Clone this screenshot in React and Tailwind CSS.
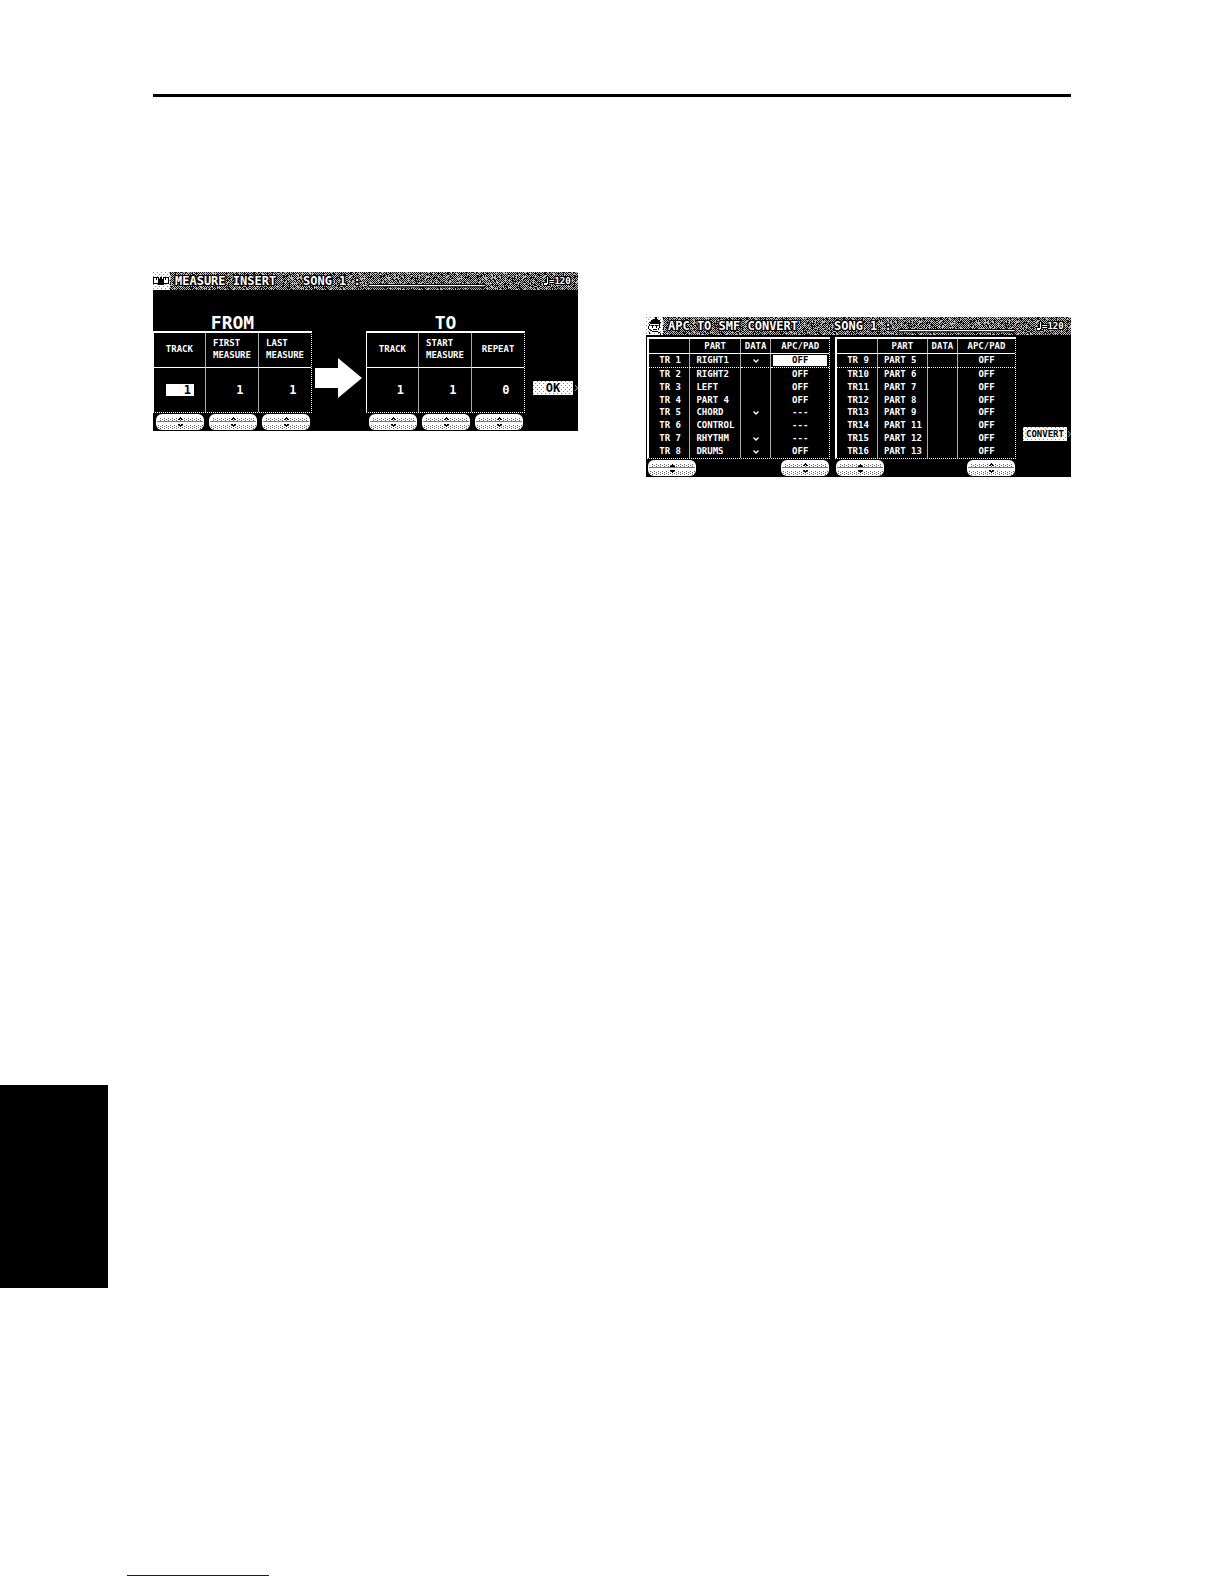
import React from "react";

/* ---------- dithered LCD textures ---------- */

function noisePath(width, height) {
  let seed = 7;
  let d = "";
  for (let y = 0; y < height; y++) {
    for (let x = 0; x < width; x++) {
      seed = (Math.imul(seed, 1664525) + 1013904223) >>> 0;
      const flip = seed / 4294967296 < 0.13;
      const on = (x + y) % 2 === 0;
      if (on !== flip) d += `M${x} ${y}h1v1h-1z`;
    }
  }
  return d;
}

const NOISE = noisePath(97, 18);

function Noise({ id }) {
  return (
    <svg className="absolute inset-0 h-full w-full" shapeRendering="crispEdges" aria-hidden="true">
      <defs>
        <pattern id={id} width="97" height="18" patternUnits="userSpaceOnUse">
          <rect width="97" height="18" fill="#141414" />
          <path d={NOISE} fill="#b4b4b4" />
        </pattern>
      </defs>
      <rect width="100%" height="100%" fill={`url(#${id})`} />
    </svg>
  );
}

function Textures() {
  return (
    <svg width="0" height="0" className="absolute" aria-hidden="true">
      <defs>
        <pattern id="dots" width="4" height="2" patternUnits="userSpaceOnUse">
          <rect width="1" height="1" fill="#666" />
          <rect x="2" y="1" width="1" height="1" fill="#666" />
        </pattern>
        <pattern id="sparse" width="4" height="4" patternUnits="userSpaceOnUse">
          <rect width="1" height="1" fill="#888" />
          <rect x="2" y="2" width="1" height="1" fill="#888" />
        </pattern>
      </defs>
    </svg>
  );
}

/* ---------- icons ---------- */

function InsertIcon() {
  return (
    <svg width="17" height="18" viewBox="0 0 17 18" shapeRendering="crispEdges" className="relative shrink-0">
      <rect width="17" height="18" fill="#fff" />
      <rect width="17" height="18" fill="url(#sparse)" />
      <path d="M0 5h6v7H0zM10 5h6v7h-6z" fill="#fff" />
      <path
        d="M0 5h6v1H0zM0 11h5v1H0zM10 5h6v1h-6zM11 11h5v1h-5zM0 5h1v7H0zM15 5h1v7h-1zM3 6h1v2H3zM12 6h1v2h-1zM5 5h1v3H5zM10 5h1v3h-1z"
        fill="#000"
      />
      <path d="M7 5h2v2H7zM5 7h6v6H5z" fill="#000" />
    </svg>
  );
}

function ConductorIcon() {
  return (
    <svg width="17" height="18" viewBox="0 0 17 18" shapeRendering="crispEdges" className="relative shrink-0">
      <rect width="17" height="18" fill="#fff" />
      <rect width="17" height="18" fill="url(#sparse)" />
      <path d="M9 0h2v2h1v1h2v2h1v1h-1v1H4V6H3V5h2V3h2V2h2z" fill="#000" />
      <path d="M3 7h1v2H3zM2 9h1v3H2zM3 12h1v1H3zM4 13h2v1H4zM13 7h1v4h-1zM12 11h1v2h-1zM6 14h6v1H6z" fill="#000" />
      <path d="M5 8h3v1H5zM6 9h1v2H6zM9 8h3v1H9zM10 9h1v2h-1zM7 12h4v1H7zM3 15h1v2H3zM12 15h2v1h-2zM14 16h1v2h-1z" fill="#000" />
    </svg>
  );
}

function QuarterNote() {
  return (
    <svg width="6" height="9" viewBox="0 0 6 9" shapeRendering="crispEdges" role="img" aria-label="quarter note">
      <path d="M3 0h3v9H1V8H0V5h3z" fill="#000" />
      <path d="M4 0h1v7H4V8H1V6h3z" fill="#fff" />
    </svg>
  );
}

function Arrow() {
  return (
    <svg width="48" height="40" viewBox="0 0 48 40">
      <path d="M0 10H23V0L47 20L23 40V30H0z" fill="#fff" />
    </svg>
  );
}

function Tick() {
  return (
    <svg width="6" height="4" viewBox="0 0 6 4" className="mx-auto" role="img" aria-label="data present">
      <path d="M0.5 0.5L3 3L5.5 0.5" fill="none" stroke="#fff" strokeWidth="1.4" />
    </svg>
  );
}

function EdgeMark() {
  return (
    <svg width="3" height="6" viewBox="0 0 3 6" aria-hidden="true">
      <path d="M0 0L2.5 3L0 6" fill="none" stroke="#999" />
    </svg>
  );
}

/* ---------- LCD controls ---------- */

function Stepper({ label, solid }) {
  return (
    <div className="flex w-12 flex-col overflow-hidden rounded-md bg-white">
      <button type="button" aria-label={`${label} up`} className="block h-2">
        <svg width="48" height="8" viewBox="0 0 48 8" shapeRendering="crispEdges">
          <rect x="3" y="4" width="42" height="3" fill="url(#dots)" />
          <rect x="1" y="7" width="46" height="1" fill="#777" />
          <path d={solid ? "M24 4h1v1h1v1h1v1h-5v-1h1v-1h1z" : "M24 3h1v1h1v1h1v1h-2v-1h-1v1h-2v-1h1v-1h1z"} fill="#000" />
        </svg>
      </button>
      <button type="button" aria-label={`${label} down`} className="block h-2">
        <svg width="48" height="8" viewBox="0 0 48 8" shapeRendering="crispEdges">
          <rect x="1" y="3" width="46" height="4" fill="url(#dots)" />
          <path d={solid ? "M22 2h5v1h-1v1h-1v1h-1v-1h-1v-1h-1z" : "M22 2h2v1h1v-1h2v1h-1v1h-1v1h-1v-1h-1v-1h-1z"} fill="#000" />
        </svg>
      </button>
    </div>
  );
}

function LcdButton({ children, size }) {
  return (
    <button
      type="button"
      className={`relative flex h-[14px] items-center justify-center bg-white font-bold text-black ${size}`}
    >
      <svg className="absolute inset-0 h-full w-full" aria-hidden="true" shapeRendering="crispEdges">
        <rect width="100%" height="100%" fill="url(#sparse)" />
      </svg>
      <span className="relative [text-shadow:1px_0_#fff,-1px_0_#fff,0_1px_#fff,0_-1px_#fff]">{children}</span>
    </button>
  );
}

function TitleBar({ id, icon, title, columns }) {
  return (
    <header className="relative flex h-[18px] items-center overflow-hidden text-[12px] leading-[18px] font-bold whitespace-pre text-white [text-shadow:1px_0_#000,-1px_0_#000,0_1px_#000,0_-1px_#000,1px_1px_#000,-1px_1px_#000,1px_-1px_#000,-1px_-1px_#000]">
      <Noise id={id} />
      {icon}
      <div className={`relative grid flex-1 items-center pl-[5px] ${columns}`}>
        <h2>{title}</h2>
        <span>SONG 1 :</span>
        <span className="self-start leading-[14px]">________________</span>
        <span className="flex items-center text-[9px]">
          <QuarterNote />
          =120
        </span>
      </div>
    </header>
  );
}

/* ---------- Measure insert ---------- */

function MeasureTable({ heading, columns }) {
  return (
    <section className="flex flex-col">
      <h3 className="text-center text-[18px] leading-[16px] font-bold">{heading}</h3>
      <table className="w-full table-fixed border-separate border-spacing-0 border-t-2 border-r border-b border-l border-dotted border-white [border-left-style:solid] [border-top-style:solid]">
        <colgroup>
          <col className="w-[33%]" />
          <col className="w-[34%]" />
          <col className="w-[33%]" />
        </colgroup>
        <thead>
          <tr>
            {columns.map((c, i) => (
              <th
                key={i}
                scope="col"
                className="h-[35px] border-r border-b border-r-[#aaa] border-b-white p-0 pb-[2px] text-center align-middle text-[9px] leading-[12px] font-bold last:border-r-0"
              >
                <span className="inline-block text-left align-middle whitespace-pre">{c.label}</span>
              </th>
            ))}
          </tr>
        </thead>
        <tbody>
          <tr>
            {columns.map((c, i) => (
              <td
                key={i}
                className="h-[44px] border-r border-[#aaa] p-0 pl-px text-center text-[12px] leading-[12px] last:border-r-0"
              >
                <span
                  className={`inline-block w-7 pr-[3px] text-right align-middle font-bold ${
                    c.active ? "bg-white text-black" : ""
                  }`}
                >
                  {c.value}
                </span>
              </td>
            ))}
          </tr>
        </tbody>
      </table>
      <div className="grid grid-cols-3 justify-items-center py-px">
        {columns.map((c, i) => (
          <Stepper key={i} label={`${heading} ${c.label.replace("\n", " ")}`} />
        ))}
      </div>
    </section>
  );
}

function MeasureInsert() {
  return (
    <article className="bg-black text-white">
      <TitleBar
        id="noise-insert"
        title="MEASURE INSERT"
        icon={<InsertIcon />}
        columns="grid-cols-[128fr_66fr_174fr_35fr]"
      />
      <div className="grid grid-cols-[159fr_54fr_159fr_53fr] pt-[25px]">
        <MeasureTable
          heading="FROM"
          columns={[
            { label: "TRACK", value: 1, active: true },
            { label: "FIRST\nMEASURE", value: 1 },
            { label: "LAST\nMEASURE", value: 1 },
          ]}
        />
        <div className="flex justify-center pt-[43px]">
          <Arrow />
        </div>
        <MeasureTable
          heading="TO"
          columns={[
            { label: "TRACK", value: 1 },
            { label: "START\nMEASURE", value: 1 },
            { label: "REPEAT", value: 0 },
          ]}
        />
        <div className="flex items-center justify-end gap-[2px] self-start pt-[66px]">
          <LcdButton size="w-10 text-[12px] leading-[14px]">OK</LcdButton>
          <EdgeMark />
        </div>
      </div>
    </article>
  );
}

/* ---------- APC to SMF convert ---------- */

const LEFT_TRACKS = [
  ["TR 1", "RIGHT1", true, "OFF"],
  ["TR 2", "RIGHT2", false, "OFF"],
  ["TR 3", "LEFT", false, "OFF"],
  ["TR 4", "PART 4", false, "OFF"],
  ["TR 5", "CHORD", true, "---"],
  ["TR 6", "CONTROL", false, "---"],
  ["TR 7", "RHYTHM", true, "---"],
  ["TR 8", "DRUMS", true, "OFF"],
];

const RIGHT_TRACKS = [
  ["TR 9", "PART 5", false, "OFF"],
  ["TR10", "PART 6", false, "OFF"],
  ["TR11", "PART 7", false, "OFF"],
  ["TR12", "PART 8", false, "OFF"],
  ["TR13", "PART 9", false, "OFF"],
  ["TR14", "PART 11", false, "OFF"],
  ["TR15", "PART 12", false, "OFF"],
  ["TR16", "PART 13", false, "OFF"],
];

function TrackTable({ name, rows, selected }) {
  return (
    <section>
      <table className="h-[122px] w-full table-fixed border-separate border-spacing-0 border-t-2 border-r border-b border-l-2 border-dotted border-white text-[9px] leading-[11px] font-bold [border-left-style:solid] [border-top-style:solid]">
        <colgroup>
          <col className="w-[23%]" />
          <col className="w-[28%]" />
          <col className="w-[17%]" />
          <col className="w-[32%]" />
        </colgroup>
        <thead>
          <tr>
            {["", "PART", "DATA", "APC/PAD"].map((h, i) => (
              <th
                key={i}
                scope="col"
                className="h-[15px] border-r border-b border-r-[#aaa] border-b-white p-0 font-bold last:border-r-0"
              >
                {h}
              </th>
            ))}
          </tr>
        </thead>
        <tbody>
          {rows.map(([track, part, data, apc], r) => {
            const line = r === 0 ? "border-b border-b-white [border-bottom-style:dotted]" : "";
            return (
              <tr key={track} className="whitespace-pre">
                <td className={`border-r border-r-[#aaa] p-0 pl-[2px] text-center ${line}`}>{track}</td>
                <td className={`border-r border-r-[#aaa] p-0 pl-[6px] ${line}`}>{part}</td>
                <td className={`border-r border-r-[#aaa] p-0 ${line}`}>{data && <Tick />}</td>
                <td className={`p-0 px-[2px] text-center ${line}`}>
                  <span className={`block ${r === 0 && selected ? "bg-white text-black" : ""}`}>{apc}</span>
                </td>
              </tr>
            );
          })}
        </tbody>
      </table>
      <div className="flex justify-between px-px pt-px pb-px">
        <Stepper label={`${name} track`} solid />
        <Stepper label={`${name} APC/PAD`} />
      </div>
    </section>
  );
}

function ApcConvert() {
  return (
    <article className="bg-black text-white">
      <TitleBar
        id="noise-convert"
        title="APC TO SMF CONVERT"
        icon={<ConductorIcon />}
        columns="grid-cols-[166fr_65fr_137fr_35fr]"
      />
      <div className="grid grid-cols-[183fr_181fr_50fr] gap-x-[5px] pt-[2px] pl-px">
        <TrackTable name="Left" rows={LEFT_TRACKS} selected />
        <TrackTable name="Right" rows={RIGHT_TRACKS} />
        <div className="flex items-center justify-end gap-px self-start pt-[90px]">
          <LcdButton size="w-11 text-[9px] leading-[14px]">CONVERT</LcdButton>
          <EdgeMark />
        </div>
      </div>
    </article>
  );
}

/* ---------- page ---------- */

export default function App() {
  return (
    <main className="bg-white font-['DejaVu_Sans_Mono','Liberation_Mono',monospace]">
      <Textures />
      <div className="px-[153px] pt-[94px]">
        <hr className="border-t-3 border-black" />
        <div className="grid grid-cols-2 items-start gap-x-[68px] pt-[175px]">
          <MeasureInsert />
          <div className="pt-[45px]">
            <ApcConvert />
          </div>
        </div>
      </div>
      <div className="mt-[608px] h-[203px] w-[108px] bg-black" />
      <footer className="pt-[267px] pb-2 pl-[127px]">
        <a href="#top" aria-label="Back to top" className="block h-[21px] w-[142px] border-b border-[#10107c]" />
      </footer>
    </main>
  );
}
